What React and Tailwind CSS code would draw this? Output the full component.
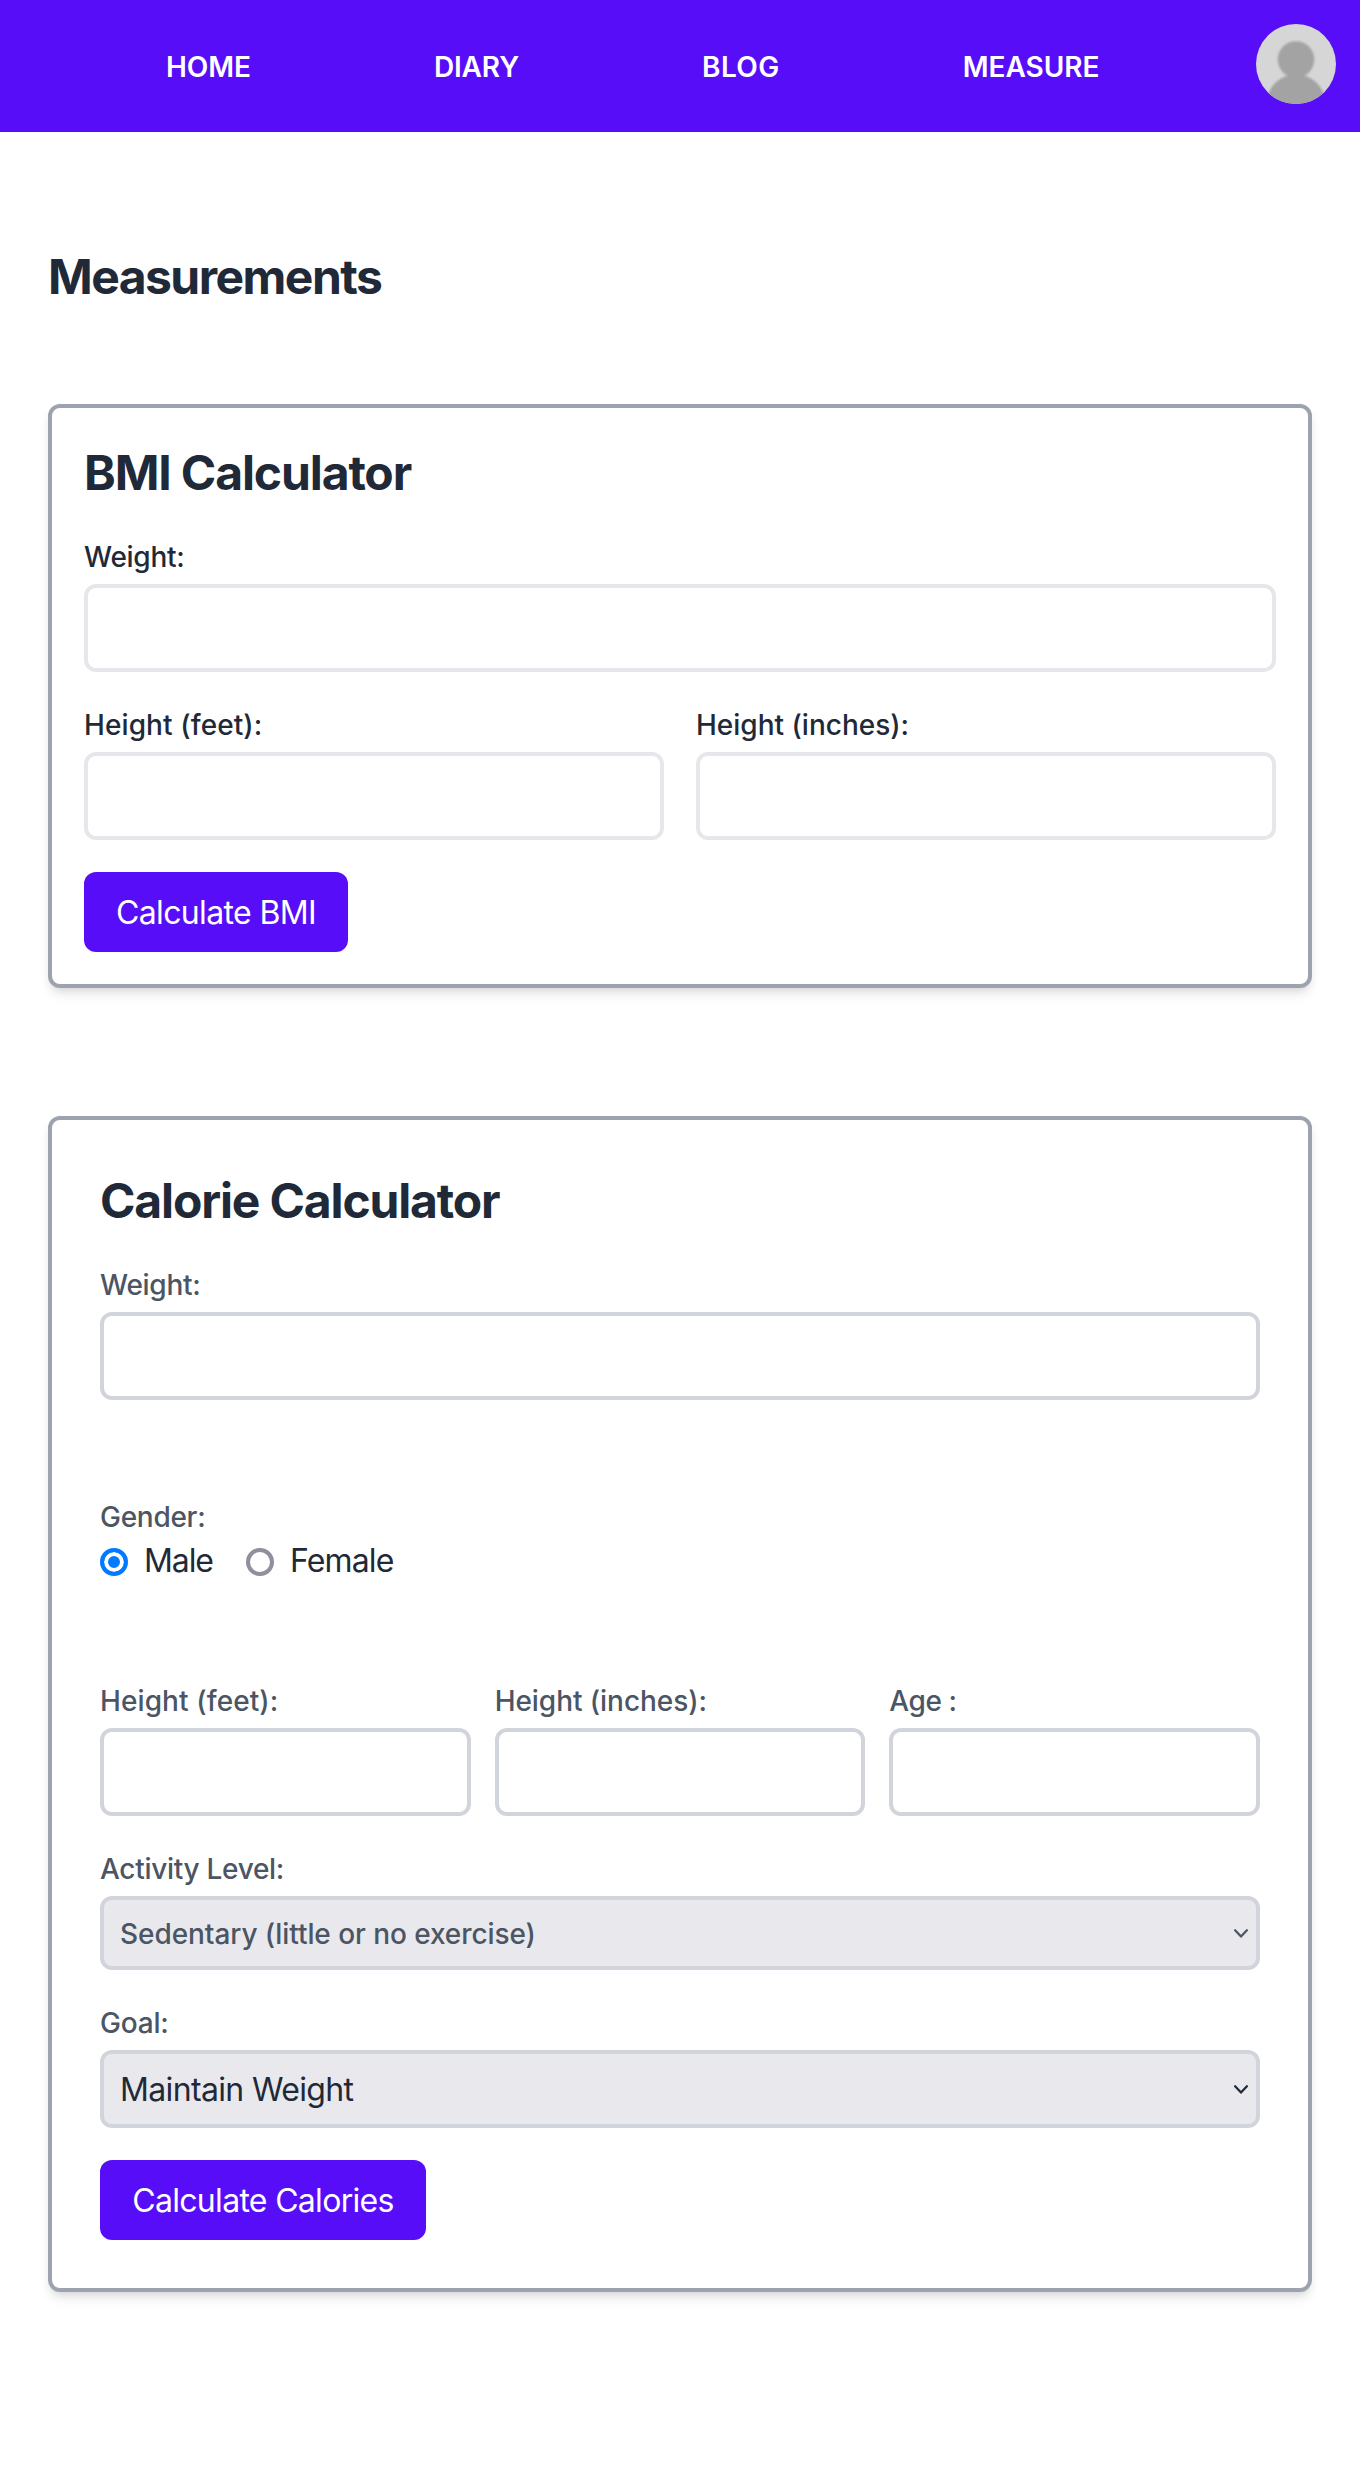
import React from "react";

const NAV_LINKS = [
  { label: "HOME", spacing: "tracking-[-0.07px]" },
  { label: "DIARY", spacing: "tracking-[-0.14px]" },
  { label: "BLOG", spacing: "tracking-[0.4px]" },
  { label: "MEASURE", spacing: "tracking-normal" },
];

function Avatar() {
  return (
    <svg viewBox="0 0 80 80" className="size-20 rounded-full" role="img" aria-label="Profile">
      <defs>
        <filter id="soft" x="-20%" y="-20%" width="140%" height="140%">
          <feGaussianBlur stdDeviation="1" />
        </filter>
      </defs>
      <rect width="80" height="80" fill="#d6d6d6" />
      <g fill="#a3a3a3" filter="url(#soft)">
        <circle cx="40" cy="35.5" r="18.3" />
        <rect x="32" y="46" width="16" height="10" />
        <ellipse cx="40" cy="77" rx="28.5" ry="26.5" />
      </g>
    </svg>
  );
}

function Navbar() {
  return (
    <header className="flex h-[132px] justify-between bg-[#570df8] pt-6 pr-6 pl-[166px]">
      <nav className="flex gap-[183px] pt-[23px] text-[28px] leading-10 font-semibold text-white">
        {NAV_LINKS.map((link) => (
          <a key={link.label} href="#" className={link.spacing}>
            {link.label}
          </a>
        ))}
      </nav>
      <Avatar />
    </header>
  );
}

function Title({ as: Tag = "h2", className, children }) {
  return <Tag className={`pt-0.5 text-5xl leading-[62px] font-bold ${className}`}>{children}</Tag>;
}

function Label({ className = "tracking-[-0.28px]", children }) {
  return (
    <span className={`block pt-px pb-[7px] text-[28px] leading-10 font-medium whitespace-nowrap ${className}`}>
      {children}
    </span>
  );
}

function Field({ label, spacing, border = "border-[#d1d5db]" }) {
  return (
    <label className="block min-w-0">
      <Label className={spacing}>{label}</Label>
      <input
        type="text"
        className={`block h-[88px] w-full rounded-xl border-4 bg-white px-4 text-[32px] text-[#1f2937] outline-none ${border}`}
      />
    </label>
  );
}

function SelectField({ label, spacing, option, className, chevron }) {
  return (
    <label className="block">
      <Label className={spacing}>{label}</Label>
      <span className="relative block">
        <select
          className={`block w-full appearance-none rounded-xl border-4 border-[#d1d5db] bg-[#e9e9ed] px-4 outline-none ${className}`}
        >
          <option>{option}</option>
        </select>
        <svg
          viewBox="0 0 14 9"
          className={`pointer-events-none absolute right-3 h-[9px] w-3.5 ${chevron}`}
          fill="none"
          stroke="currentColor"
          strokeWidth="2.2"
          strokeLinecap="round"
          strokeLinejoin="round"
        >
          <path d="M1.1 1.2 7 7.6 12.9 1.2" />
        </svg>
      </span>
    </label>
  );
}

function Radio({ label, spacing, checked }) {
  return (
    <label className="flex items-center gap-4">
      <input
        type="radio"
        name="gender"
        defaultChecked={checked}
        className="relative top-0.5 size-7 shrink-0 appearance-none rounded-full border-4 border-[#8f8f9d] bg-white checked:border-[#007aff] checked:bg-[#007aff] checked:shadow-[inset_0_0_0_4px_#fff]"
      />
      <span className={`pt-0.5 text-[32px] leading-[46px] ${spacing}`}>{label}</span>
    </label>
  );
}

function SubmitButton({ width, spacing, children }) {
  return (
    <button
      type="button"
      className={`mt-8 block h-20 rounded-xl bg-[#570df8] pt-0.5 text-[32px] leading-[46px] whitespace-nowrap text-white ${width} ${spacing}`}
    >
      {children}
    </button>
  );
}

function Card({ className, children }) {
  return (
    <section
      className={`rounded-xl border-4 border-[#9ca3af] bg-white shadow-[0_8px_12px_-2px_rgba(0,0,0,0.1),0_4px_8px_-4px_rgba(0,0,0,0.1)] ${className}`}
    >
      {children}
    </section>
  );
}

function BmiCalculator() {
  return (
    <Card className="mt-24 p-8">
      <Title className="mb-8 tracking-[-1.12px]">BMI Calculator</Title>
      <Field label="Weight:" border="border-[#e5e7eb]" />
      <div className="mt-8 grid grid-cols-2 gap-8">
        <Field label="Height (feet):" spacing="tracking-[0.1px]" border="border-[#e5e7eb]" />
        <Field label="Height (inches):" spacing="tracking-normal" border="border-[#e5e7eb]" />
      </div>
      <SubmitButton width="w-[264px]" spacing="tracking-[-0.64px]">
        Calculate BMI
      </SubmitButton>
    </Card>
  );
}

function CalorieCalculator() {
  return (
    <Card className="mt-32 p-12">
      <Title className="mb-8 tracking-[-1.15px]">Calorie Calculator</Title>
      <div className="text-[#4b5563]">
        <Field label="Weight:" />
      </div>
      <div className="mt-24">
        <div className="h-10 text-[#4b5563]">
          <Label>Gender:</Label>
        </div>
        <div className="flex gap-[33px]">
          <Radio label="Male" spacing="tracking-[-1.1px]" checked />
          <Radio label="Female" spacing="tracking-[-0.85px]" />
        </div>
      </div>
      <div className="mt-24 grid grid-cols-3 gap-6 text-[#4b5563]">
        <Field label="Height (feet):" spacing="tracking-[0.1px]" />
        <Field label="Height (inches):" spacing="tracking-[-0.05px]" />
        <Field label="Age :" spacing="tracking-[-0.4px]" />
      </div>
      <div className="mt-8 text-[#4b5563]">
        <SelectField
          label="Activity Level:"
          spacing="tracking-[-0.3px]"
          option="Sedentary (little or no exercise)"
          className="h-[74px] pt-0.5 text-[28px] font-medium tracking-[-0.07px]"
          chevron="top-[33px]"
        />
      </div>
      <div className="mt-8 text-[#4b5563]">
        <SelectField
          label="Goal:"
          spacing="tracking-[-0.2px]"
          option="Maintain Weight"
          className="h-[78px] pt-0.5 text-[32px] tracking-[-0.65px] text-[#1f2937]"
          chevron="top-[35px] text-[#1f2937]"
        />
      </div>
      <SubmitButton width="w-[326px]" spacing="tracking-[-0.69px]">
        Calculate Calories
      </SubmitButton>
    </Card>
  );
}

export default function App() {
  return (
    <div className="min-h-screen bg-white font-[Inter,sans-serif] text-[#1f2937] antialiased">
      <Navbar />
      <main className="px-12 pt-28 pb-[176px]">
        <Title as="h1" className="tracking-[-1.54px]">
          Measurements
        </Title>
        <BmiCalculator />
        <CalorieCalculator />
      </main>
    </div>
  );
}
